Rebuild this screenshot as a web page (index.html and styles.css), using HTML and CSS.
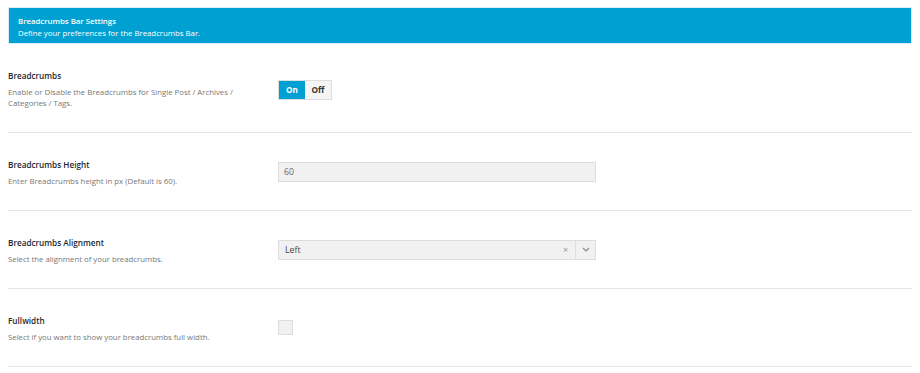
FILE: index.html
```html
<!DOCTYPE html>
<html lang="en">
<head>
  <meta charset="UTF-8" />
  <meta name="viewport" content="width=device-width, initial-scale=1.0"/>
  <title>Breadcrumbs Bar Settings</title>
  <link rel="stylesheet" href="styles.css">
</head>
<body>

  <div class="section-head">
    <h3>Breadcrumbs Bar Settings</h3>
    <p>Define your preferences for the Breadcrumbs Bar.</p>
  </div>

  <div class="field">
    <div class="field-label">
      <h4>Breadcrumbs</h4>
      <p>Enable or Disable the Breadcrumbs for Single Post / Archives / Categories / Tags.</p>
    </div>
    <div class="field-control">
      <div class="switch">
        <span class="switch-on">On</span>
        <span class="switch-off">Off</span>
      </div>
    </div>
  </div>

  <div class="field">
    <div class="field-label">
      <h4>Breadcrumbs Height</h4>
      <p>Enter Breadcrumbs height in px (Default is 60).</p>
    </div>
    <div class="field-control">
      <input type="text" class="text-input" value="60">
    </div>
  </div>

  <div class="field">
    <div class="field-label">
      <h4>Breadcrumbs Alignment</h4>
      <p>Select the alignment of your breadcrumbs.</p>
    </div>
    <div class="field-control">
      <div class="select-box">
        <span class="select-value">Left</span>
        <span class="select-clear">&times;</span>
        <span class="select-arrow">
          <svg width="8" height="5" viewBox="0 0 8 5"><path d="M1 1l3 3 3-3" fill="none" stroke="#888" stroke-width="1.2"/></svg>
        </span>
      </div>
    </div>
  </div>

  <div class="field">
    <div class="field-label">
      <h4>Fullwidth</h4>
      <p>Select if you want to show your breadcrumbs full width.</p>
    </div>
    <div class="field-control">
      <span class="checkbox"></span>
    </div>
  </div>

</body>
</html>
```

FILE: styles.css
```css
* {
  box-sizing: border-box;
}

body {
  margin: 7px 8px 8px;
  font-family: "Open Sans", sans-serif;
  background: #fff;
  color: #23282d;
}

h3, h4, p {
  margin: 0;
}

/* Blue section header */
.section-head {
  background: #00a0d2;
  color: #fff;
  height: 37px;
  padding: 7px 9px;
  border: 1px solid #d9eef6;
}

.section-head h3 {
  font-size: 7.8px;
  font-weight: 600;
  line-height: 12px;
}

.section-head p {
  font-size: 7.8px;
  line-height: 12px;
}

/* Option rows */
.field {
  display: flex;
  align-items: center;
  padding: 25px 0 23px;
  border-bottom: 1px solid #e5e5e5;
}

.field-label {
  width: 245px;
  margin-right: 25px;
}

.field-label h4 {
  font-size: 8.2px;
  font-weight: 600;
  line-height: 13px;
  color: #23282d;
  margin-bottom: 5px;
}

.field-label p {
  font-size: 7.8px;
  line-height: 11px;
  color: #777;
}

.field-control {
  flex: 1;
  margin-top: -2px;
}

/* On / Off switch */
.switch {
  display: inline-flex;
  height: 20px;
  border: 1px solid #ddd;
  font-size: 8.2px;
  font-weight: 700;
}

.switch span {
  display: flex;
  align-items: center;
  justify-content: center;
}

.switch-on {
  width: 26px;
  background: #00a0d2;
  color: #fff;
}

.switch-off {
  width: 26px;
  background: #f5f5f5;
  color: #333;
}

/* Text input */
.text-input {
  display: block;
  width: 318px;
  height: 20px;
  padding: 0 5px;
  border: 1px solid #ddd;
  background: #f1f1f1;
  font-family: "Open Sans", sans-serif;
  font-size: 8.8px;
  color: #666;
  outline: none;
}

/* Select */
.select-box {
  display: flex;
  align-items: center;
  width: 318px;
  height: 20px;
  border: 1px solid #ddd;
  background: #f1f1f1;
  font-size: 8.8px;
  color: #444;
}

.select-value {
  flex: 1;
  padding-left: 6px;
}

.select-clear {
  width: 8px;
  font-size: 9px;
  color: #999;
  margin-right: 4px;
}

.select-arrow {
  width: 20px;
  height: 100%;
  border-left: 1px solid #ddd;
  display: flex;
  align-items: center;
  justify-content: center;
}

/* Checkbox */
.checkbox {
  display: block;
  width: 15px;
  height: 15px;
  border: 1px solid #ddd;
  background: #f1f1f1;
}
```
